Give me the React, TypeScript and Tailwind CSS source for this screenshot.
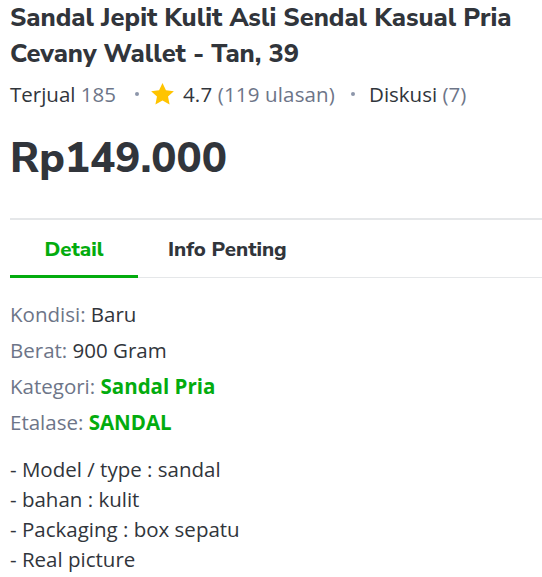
import { useState } from "react";

const tabs = ["Detail", "Info Penting"];

const specs = [
  { label: "Kondisi", value: "Baru" },
  { label: "Berat", value: "900 Gram" },
  { label: "Kategori", value: "Sandal Pria", link: true },
  { label: "Etalase", value: "SANDAL", link: true },
];

const notes = [
  "- Model / type : sandal",
  "- bahan : kulit",
  "- Packaging : box sepatu",
  "- Real picture",
];

function Star() {
  return (
    <svg viewBox="0 0 24 24" className="w-[25px] h-[25px]" fill="#ffc400">
      <path d="M12 1l3.3 6.9 7.6.9-5.6 5.2 1.5 7.5L12 17.8l-6.8 3.7 1.5-7.5L1.1 8.8l7.6-.9z" />
    </svg>
  );
}

function Dot() {
  return <span className="w-[4px] h-[4px] rounded-full bg-[#8d96aa]" />;
}

export default function App() {
  const [active, setActive] = useState(0);

  return (
    <div className="bg-white pl-[10px] text-[#31353b] font-['Open_Sans',sans-serif]">
      <h1 className="text-[25.5px] leading-[36px] font-extrabold font-['Nunito_Sans','Lato',sans-serif] pr-2">
        Sandal Jepit Kulit Asli Sendal Kasual Pria Cevany Wallet - Tan, 39
      </h1>

      <div className="flex items-center mt-[9px] h-[26px] text-[20.5px] leading-[26px]">
        <span>
          Terjual <span className="text-[#6d7588]">185</span>
        </span>
        <span className="ml-[19px] mr-[11px] flex">
          <Dot />
        </span>
        <Star />
        <span className="ml-[8px] tracking-[0.15px]">
          4.7 <span className="text-[#6d7588]">(119 ulasan)</span>
        </span>
        <span className="ml-[16px] mr-[14px] flex">
          <Dot />
        </span>
        <span>
          Diskusi <span className="text-[#6d7588]">(7)</span>
        </span>
      </div>

      <div className="mt-[28px] text-[42px] leading-[48px] font-extrabold font-['Nunito_Sans','Lato',sans-serif]">
        Rp149.000
      </div>

      <div className="mt-[35px] border-t-2 border-[#e5e7e9]">
        <div className="flex border-b border-[#e5e7e9]">
          {tabs.map((t, i) => (
            <button
              key={t}
              onClick={() => setActive(i)}
              className={
                "h-[58px] pt-[4px] text-[20.5px] font-extrabold font-['Nunito_Sans','Lato',sans-serif] border-b-[3px] -mb-px " +
                (i === 0 ? "w-[128px] " : "px-[30px] ") +
                (active === i
                  ? "text-[#03ac0e] border-[#03ac0e]"
                  : "text-[#31353b] border-transparent")
              }
            >
              {t}
            </button>
          ))}
        </div>
      </div>

      <div className="pt-[23px] flex flex-col gap-[10px] text-[20.5px] leading-[26px]">
        {specs.map((s) => (
          <div key={s.label}>
            <span className="text-[#6d7588]">{s.label}: </span>
            <span className={s.link ? "text-[#03ac0e] font-bold" : ""}>
              {s.value}
            </span>
          </div>
        ))}
      </div>

      <div className="mt-[19px] text-[20.5px] leading-[30px]">
        {notes.map((n) => (
          <div key={n}>{n}</div>
        ))}
      </div>
    </div>
  );
}
